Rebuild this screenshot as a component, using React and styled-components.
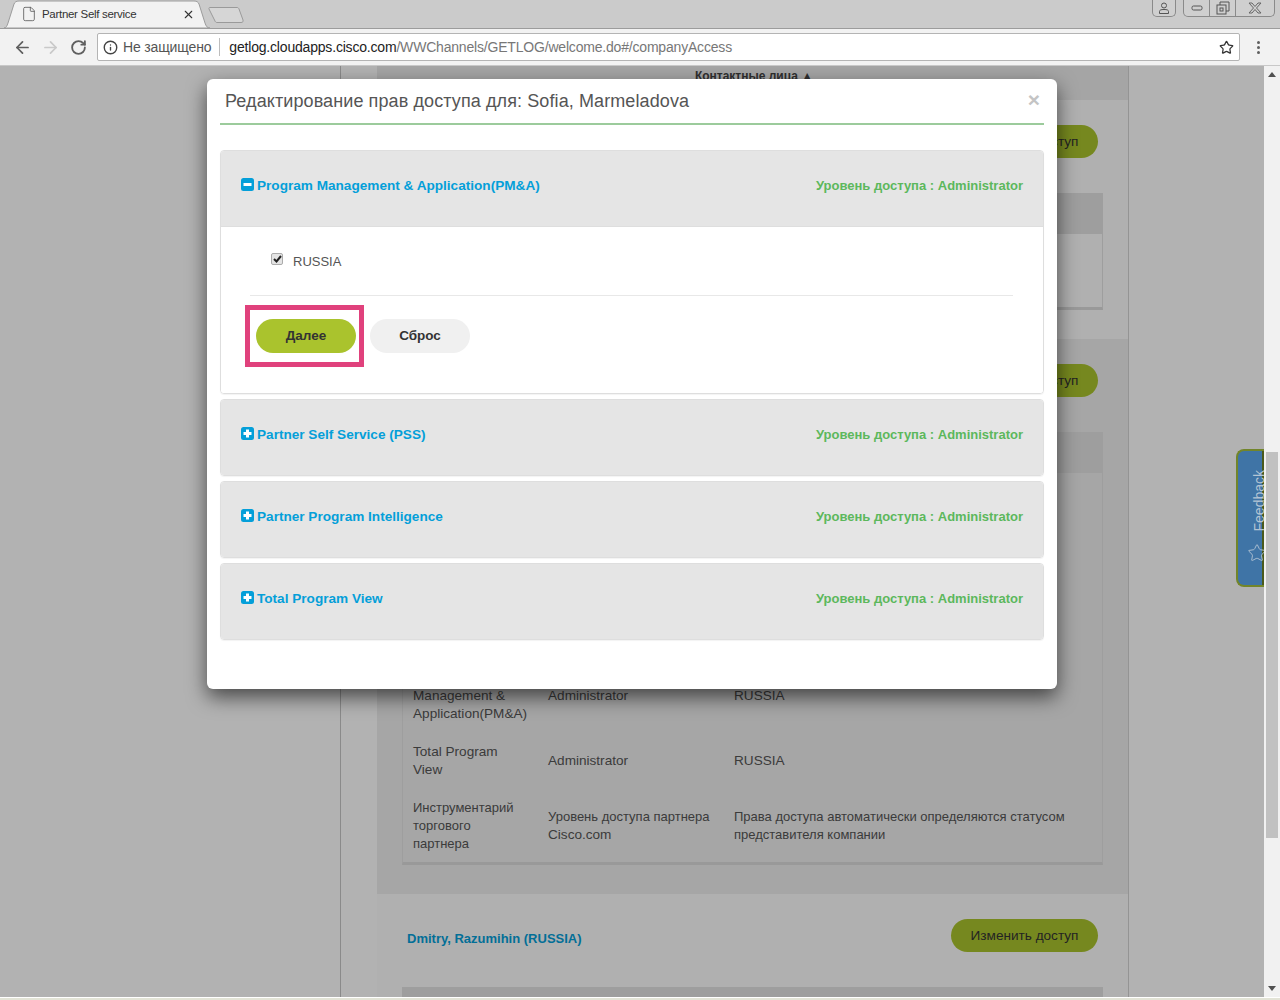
import React from "react";
import styled, { createGlobalStyle } from "styled-components";
import { ArrowLeft, ArrowRight, RotateCw, Info, Star, File, X } from "lucide-react";

const GlobalStyle = createGlobalStyle`
  html, body {
    margin: 0;
    padding: 0;
    background: #fff;
    font-family: "Liberation Sans", Arial, sans-serif;
  }
  * {
    box-sizing: border-box;
  }
`;

const Screen = styled.div`
  width: 1280px;
  height: 1000px;
  display: flex;
  flex-direction: column;
  overflow: hidden;
`;

/* browser chrome */
const TabStrip = styled.div`
  height: 29px;
  background: #cbcbcb;
  border-bottom: 1px solid #9c9c9c;
  display: flex;
  justify-content: space-between;
  padding-left: 4px;
  padding-right: 5px;
`;
const TabGroup = styled.div`
  display: flex;
  align-items: flex-start;
`;
const Tab = styled.div`
  position: relative;
  width: 206px;
  height: 29px;
  display: flex;
  align-items: center;
  padding: 0 15px 1px 17px;
  font-size: 11.5px;
  color: #333;
  letter-spacing: -0.3px;
`;
const TabShape = styled.svg`
  position: absolute;
  left: 0;
  top: 0;
`;
const TabIcon = styled(File)`
  position: relative;
  margin-right: 5px;
  color: #555;
`;
const TabTitle = styled.span`
  position: relative;
  flex: 1;
`;
const TabClose = styled(X)`
  position: relative;
  color: #333;
`;
const NewTab = styled.svg`
  margin-top: 6px;
  margin-left: -2px;
`;
const WindowControls = styled.div`
  display: flex;
  gap: 7px;
`;
const WindowBox = styled.div`
  height: 17px;
  display: flex;
  border: 1px solid #8a8a8a;
  border-top: none;
  border-radius: 0 0 5px 5px;
  background: #cfcfcf;
`;
const WindowButton = styled.div`
  width: ${(p) => p.$w}px;
  display: flex;
  align-items: center;
  justify-content: center;
  & + & {
    border-left: 1px solid #8a8a8a;
  }
`;
const Toolbar = styled.div`
  height: 37px;
  background: #f2f2f2;
  border-bottom: 1px solid #c8c8c8;
  display: flex;
  align-items: flex-start;
  padding: 4px 0 0 8px;
`;
const NavButton = styled.div`
  width: 28px;
  height: 28px;
  display: flex;
  align-items: center;
  justify-content: center;
  color: ${(p) => p.$color};
`;
const Omnibox = styled.div`
  width: 1143px;
  height: 28px;
  margin-left: 5px;
  display: flex;
  align-items: center;
  background: #fff;
  border: 1px solid #b4b4b4;
  border-radius: 2px;
  padding: 0 5px 0 5px;
  font-size: 14px;
`;
const Insecure = styled.span`
  margin-left: 5px;
  color: #555;
  padding-right: 8px;
  border-right: 1px solid #bdbdbd;
  line-height: 18px;
  letter-spacing: -0.15px;
`;
const UrlHost = styled.span`
  margin-left: 9px;
  color: #222;
  letter-spacing: -0.19px;
`;
const UrlPath = styled.span`
  color: #777;
  flex: 1;
  letter-spacing: -0.19px;
`;
const MenuDots = styled.div`
  margin-left: 17px;
  margin-top: 8px;
  display: flex;
  flex-direction: column;
  gap: 2px;
  & > i {
    width: 3px;
    height: 3px;
    border-radius: 50%;
    background: #5f5f5f;
  }
`;

/* page under the dialog */
const Viewport = styled.div`
  height: 931px;
  display: flex;
`;
const PageArea = styled.div`
  position: relative;
  width: 1264px;
  overflow: hidden;
  display: flex;
  background: #fff;
`;
const SideColumn = styled.div`
  width: 341px;
  border-right: 1px solid #c6c6c6;
`;
const Main = styled.div`
  width: 788px;
  padding-left: 36px;
  border-right: 1px solid #d4d4d4;
`;
const ColumnHead = styled.div`
  height: 34px;
  background: #ececec;
  padding-left: 3px;
  text-align: center;
  font-size: 12px;
  font-weight: bold;
  line-height: 21px;
  color: #444;
`;
const Section = styled.div`
  background: ${(p) => (p.$active ? "#eeeeee" : "#fcfcfc")};
  padding: 25px 25px 29px;
`;
const SectionHead = styled.div`
  display: flex;
  justify-content: space-between;
  align-items: center;
  height: 33px;
  padding: 0 5px;
`;
const PersonName = styled.a`
  font-size: 13px;
  font-weight: bold;
  color: #049fd9;
  padding-top: 5px;
`;
const ChangeButton = styled.div`
  width: 147px;
  height: 33px;
  border-radius: 17px;
  background: #aac32d;
  color: #333;
  font-size: 13.6px;
  padding-bottom: 1px;
  display: flex;
  align-items: center;
  justify-content: center;
`;
const AccessTable = styled.div`
  margin-top: 35px;
  border: 1px solid #e2e2e2;
  border-top: none;
  border-bottom: 3px solid #dcdcdc;
`;
const TableHead = styled.div`
  height: 41px;
  margin: 0 -1px;
  background: #e3e3e3;
`;
const TableBody = styled.div`
  padding-top: ${(p) => p.$top}px;
`;
const TableRow = styled.div`
  display: grid;
  grid-template-columns: 135px 186px 1fr;
  align-items: center;
  padding: 11px 10px 9px;
  line-height: 18px;
  color: #555;
`;
const CellLine = styled.div`
  font-size: ${(p) => (p.$cyrillic ? "13px" : "13.6px")};
`;

/* dialog */
const Backdrop = styled.div`
  position: absolute;
  inset: 0;
  background: rgba(0, 0, 0, 0.3);
`;
const Modal = styled.div`
  position: absolute;
  left: 207px;
  top: 13px;
  width: 850px;
  height: 610px;
  background: #fff;
  border-radius: 6px;
  box-shadow: 0 8px 20px rgba(0, 0, 0, 0.6);
  padding: 0 13px;
`;
const ModalHeader = styled.div`
  height: 46px;
  border-bottom: 2px solid #9ccb9c;
  display: flex;
  align-items: flex-start;
  justify-content: space-between;
  padding: 11px 4px 0 5px;
`;
const ModalTitle = styled.h4`
  margin: 0;
  font-size: 18px;
  font-weight: normal;
  line-height: 22px;
  letter-spacing: 0.1px;
  color: #555;
`;
const CloseMark = styled.span`
  font-size: 21px;
  font-weight: bold;
  line-height: 20px;
  color: #c4c4c4;
`;
const Accordion = styled.div`
  margin-top: 25px;
  display: flex;
  flex-direction: column;
  gap: 5px;
`;
const Panel = styled.div`
  border: 1px solid #dedede;
  border-radius: 4px;
  overflow: hidden;
  box-shadow: 0 1px 1px rgba(0, 0, 0, 0.05);
`;
const PanelHead = styled.div`
  height: 75px;
  background: #e5e5e5;
  display: flex;
  justify-content: space-between;
  padding: 25px 20px 0 20px;
  font-weight: bold;
  line-height: 20px;
`;
const PanelTitle = styled.div`
  display: flex;
  align-items: center;
  gap: 3px;
  height: 20px;
  font-size: 13.6px;
  color: #049fd9;
`;
const ToggleGlyph = styled.svg`
  margin-bottom: 4px;
`;
const PanelLevel = styled.div`
  font-size: 13px;
  color: #5cb85c;
`;
const PanelBody = styled.div`
  border-top: 1px solid #dedede;
  padding: 24px 30px 26px 24px;
  background: #fff;
`;
const RegionRow = styled.label`
  display: flex;
  align-items: center;
  gap: 10px;
  height: 20px;
  margin-left: 26px;
  font-size: 13px;
  color: #555;
`;
const CheckBox = styled.span`
  width: 12px;
  height: 12px;
  margin-top: -4px;
  border: 1px solid #ababab;
  border-radius: 2px;
  background: #e4e4e4;
  display: flex;
  align-items: center;
  justify-content: center;
`;
const Divider = styled.div`
  margin: 24px 0 9px 5px;
  border-top: 1px solid #e8e8e8;
`;
const ButtonRow = styled.div`
  display: flex;
  align-items: center;
  gap: 6px;
`;
const Highlight = styled.div`
  border: 5px solid #e0417c;
  padding: 9px 3px 9px 6px;
`;
const PillButton = styled.button`
  width: 100px;
  height: 34px;
  border: none;
  border-radius: 17px;
  padding: 0 0 2px;
  background: ${(p) => (p.$primary ? "#aac32d" : "#f0f0f0")};
  color: #333;
  font-family: inherit;
  font-size: 13.5px;
  font-weight: bold;
`;

/* feedback tab and scrollbar */
const FeedbackTab = styled.div`
  position: absolute;
  right: 0;
  top: 383px;
  width: 28px;
  height: 138px;
  background: linear-gradient(to right, #3f74a6 24px, #4a5a1c 24px);
  border: 2px solid #72852a;
  border-right: none;
  border-radius: 8px 0 0 8px;
  overflow: hidden;
`;
const FeedbackText = styled.span`
  position: absolute;
  left: 12px;
  top: 19px;
  writing-mode: vertical-rl;
  transform: rotate(180deg);
  font-size: 14px;
  line-height: 18px;
  color: #b4c4d4;
`;
const FeedbackStar = styled(Star)`
  position: absolute;
  left: 9px;
  top: 92px;
  color: #b4c4d4;
`;
const Scrollbar = styled.div`
  position: relative;
  width: 16px;
  background: #f1f1f1;
`;
const ScrollThumb = styled.div`
  position: absolute;
  left: 2px;
  right: 2px;
  top: 386px;
  height: 386px;
  background: #c1c1c1;
`;
const ScrollArrow = styled.span`
  position: absolute;
  left: 4px;
  ${(p) => (p.$down ? "bottom: 6px;" : "top: 6px;")}
  width: 0;
  height: 0;
  border-left: 4px solid transparent;
  border-right: 4px solid transparent;
  ${(p) =>
    p.$down ? "border-top: 5px solid #505050;" : "border-bottom: 5px solid #505050;"}
`;
const BottomEdge = styled.div`
  height: 3px;
  background: #e2e3d6;
  border-top: 1px solid #fff;
`;

const panels = [
  { title: "Partner Self Service (PSS)" },
  { title: "Partner Program Intelligence" },
  { title: "Total Program View" },
];

const rows = [
  {
    tool: ["Program", "Management &", "Application(PM&A)"],
    level: ["Administrator"],
    scope: ["RUSSIA"],
  },
  { tool: ["Total Program", "View"], level: ["Administrator"], scope: ["RUSSIA"] },
  {
    tool: ["Инструментарий", "торгового", "партнера"],
    level: ["Уровень доступа партнера", "Cisco.com"],
    scope: ["Права доступа автоматически определяются статусом", "представителя компании"],
  },
];

const Lines = ({ items }) => (
  <div>
    {items.map((line) => (
      <CellLine key={line} $cyrillic={/[а-я]/i.test(line)}>
        {line}
      </CellLine>
    ))}
  </div>
);

const ToggleIcon = ({ open }) => (
  <ToggleGlyph width="13" height="13" viewBox="0 0 13 13">
    <rect width="13" height="13" rx="2.5" fill="#049fd9" />
    <rect x="2.5" y="5" width="8" height="3" fill="#fff" />
    {!open && <rect x="5" y="2.5" width="3" height="8" fill="#fff" />}
  </ToggleGlyph>
);

const AccessPanel = ({ title, open, children }) => (
  <Panel>
    <PanelHead>
      <PanelTitle>
        <ToggleIcon open={open} />
        {title}
      </PanelTitle>
      <PanelLevel>Уровень доступа : Administrator</PanelLevel>
    </PanelHead>
    {children}
  </Panel>
);

const App = () => {
  return (
    <Screen>
      <GlobalStyle />
      <TabStrip>
        <TabGroup>
          <Tab>
            <TabShape width="206" height="29" viewBox="0 0 206 29">
              <path
                d="M0 28 C2 28 3 26 4 23 L10 4 C11 2 12 1 15 1 L190 1 C193 1 194 2 195 4 L201 23 C202 26 203 28 206 28 Z"
                fill="#f2f2f2"
                stroke="#9c9c9c"
              />
            </TabShape>
            <TabIcon size={16} strokeWidth={1.2} />
            <TabTitle>Partner Self service</TabTitle>
            <TabClose size={13} strokeWidth={2} />
          </Tab>
          <NewTab width="36" height="18" viewBox="0 0 36 18">
            <path
              d="M2 1.5 L29 1.5 C30 1.5 30.5 2 31 3 L35 14 C35.3 15.5 35 16.5 33 16.5 L9 16.5 C8 16.5 7.5 16 7 15 L1 3 C0.7 2 1 1.5 2 1.5 Z"
              fill="#d6d6d6"
              stroke="#9a9a9a"
            />
          </NewTab>
        </TabGroup>
        <WindowControls>
          <WindowBox>
            <WindowButton $w={22}>
              <svg width="12" height="12" viewBox="0 0 12 12" fill="none" stroke="#555">
                <circle cx="6" cy="3.5" r="2.5" />
                <path d="M1.5 11.5 V9.5 C1.5 8 3 7.5 6 7.5 C9 7.5 10.5 8 10.5 9.5 V11.5 Z" />
              </svg>
            </WindowButton>
          </WindowBox>
          <WindowBox>
            <WindowButton $w={25}>
              <svg width="12" height="6" viewBox="0 0 12 6" fill="none" stroke="#555">
                <rect x="1" y="1" width="10" height="4" rx="1.5" />
              </svg>
            </WindowButton>
            <WindowButton $w={26}>
              <svg width="14" height="14" viewBox="0 0 14 14" fill="none" stroke="#555">
                <rect x="1" y="4" width="9" height="9" />
                <rect x="4" y="7" width="3" height="3" />
                <path d="M4 4 V1 H13 V10 H10" />
              </svg>
            </WindowButton>
            <WindowButton $w={39}>
              <svg width="14" height="12" viewBox="0 0 14 12" fill="none" stroke="#666">
                <path d="M1 1 H4 L7 4.5 L10 1 H13 L8.5 6 L13 11 H10 L7 7.5 L4 11 H1 L5.5 6 Z" />
              </svg>
            </WindowButton>
          </WindowBox>
        </WindowControls>
      </TabStrip>
      <Toolbar>
        <NavButton $color="#5f5f5f">
          <ArrowLeft size={19} strokeWidth={2.2} />
        </NavButton>
        <NavButton $color="#c9c9c9">
          <ArrowRight size={19} strokeWidth={2.2} />
        </NavButton>
        <NavButton $color="#5f5f5f">
          <RotateCw size={17} strokeWidth={2.6} />
        </NavButton>
        <Omnibox>
          <Info size={15} color="#444" strokeWidth={2.2} />
          <Insecure>Не защищено</Insecure>
          <UrlHost>getlog.cloudapps.cisco.com</UrlHost>
          <UrlPath>/WWChannels/GETLOG/welcome.do#/companyAccess</UrlPath>
          <Star size={15} color="#333" strokeWidth={2} />
        </Omnibox>
        <MenuDots>
          <i />
          <i />
          <i />
        </MenuDots>
      </Toolbar>
      <Viewport>
        <PageArea>
          <SideColumn />
          <Main>
            <ColumnHead>Контактные лица ▲</ColumnHead>
            <Section>
              <SectionHead>
                <PersonName>Sofia, Marmeladova (RUSSIA)</PersonName>
                <ChangeButton>Изменить доступ</ChangeButton>
              </SectionHead>
              <AccessTable>
                <TableHead />
                <TableBody $top={17}>
                  <TableRow>
                    <Lines items={["Total Program", "View"]} />
                    <Lines items={["Administrator"]} />
                    <Lines items={["RUSSIA"]} />
                  </TableRow>
                </TableBody>
              </AccessTable>
            </Section>
            <Section $active>
              <SectionHead>
                <PersonName>Alexey, Ivanov (RUSSIA)</PersonName>
                <ChangeButton>Изменить доступ</ChangeButton>
              </SectionHead>
              <AccessTable>
                <TableHead />
                <TableBody $top={185}>
                  {rows.map((row) => (
                    <TableRow key={row.tool.join()}>
                      <Lines items={row.tool} />
                      <Lines items={row.level} />
                      <Lines items={row.scope} />
                    </TableRow>
                  ))}
                </TableBody>
              </AccessTable>
            </Section>
            <Section>
              <SectionHead>
                <PersonName>Dmitry, Razumihin (RUSSIA)</PersonName>
                <ChangeButton>Изменить доступ</ChangeButton>
              </SectionHead>
              <AccessTable>
                <TableHead />
              </AccessTable>
            </Section>
          </Main>
          <Backdrop />
          <Modal>
            <ModalHeader>
              <ModalTitle>Редактирование прав доступа для: Sofia, Marmeladova</ModalTitle>
              <CloseMark>×</CloseMark>
            </ModalHeader>
            <Accordion>
              <AccessPanel title="Program Management & Application(PM&A)" open>
                <PanelBody>
                  <RegionRow>
                    <CheckBox>
                      <svg width="9" height="8" viewBox="0 0 9 8">
                        <path d="M1 4 L3.5 6.5 L8 1" fill="none" stroke="#222" strokeWidth="2" />
                      </svg>
                    </CheckBox>
                    RUSSIA
                  </RegionRow>
                  <Divider />
                  <ButtonRow>
                    <Highlight>
                      <PillButton $primary>Далее</PillButton>
                    </Highlight>
                    <PillButton>Сброс</PillButton>
                  </ButtonRow>
                </PanelBody>
              </AccessPanel>
              {panels.map((panel) => (
                <AccessPanel key={panel.title} title={panel.title} />
              ))}
            </Accordion>
          </Modal>
          <FeedbackTab>
            <FeedbackText>Feedback</FeedbackText>
            <FeedbackStar size={20} strokeWidth={1.1} />
          </FeedbackTab>
        </PageArea>
        <Scrollbar>
          <ScrollArrow />
          <ScrollThumb />
          <ScrollArrow $down />
        </Scrollbar>
      </Viewport>
      <BottomEdge />
    </Screen>
  );
};

export default App;
